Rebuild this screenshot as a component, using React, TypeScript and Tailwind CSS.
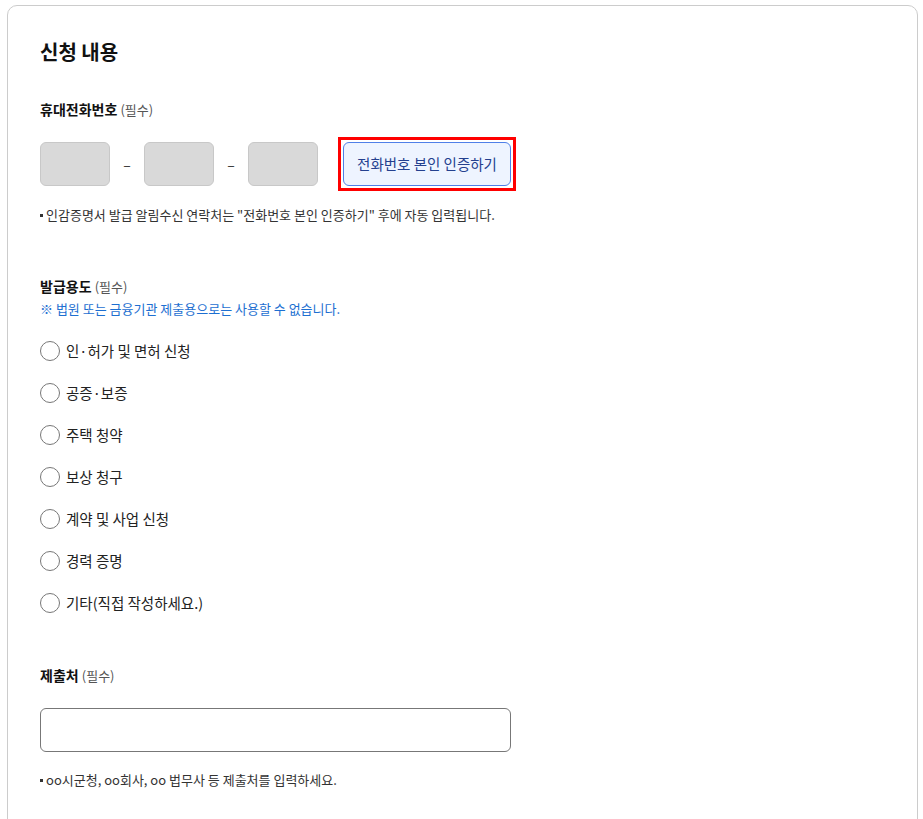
const purposes = [
  "인·허가 및 면허 신청",
  "공증·보증",
  "주택 청약",
  "보상 청구",
  "계약 및 사업 신청",
  "경력 증명",
  "기타(직접 작성하세요.)",
];

function FieldLabel({ title }: { title: string }) {
  return (
    <p className="text-[14px] leading-[20px] text-[#111]">
      <span className="font-bold">{title}</span>{" "}
      <span className="text-[13px] text-[#555]">(필수)</span>
    </p>
  );
}

function PhoneBox() {
  return (
    <input
      type="text"
      disabled
      className="h-[44px] w-[70px] rounded-[6px] border border-[#c8c8c8] bg-[#d9d9d9]"
    />
  );
}

export default function App() {
  return (
    <div
      className="min-h-[819px] bg-white pl-[7px] pr-[5px] pt-[5px] text-[#222]"
      style={{ fontFamily: '"Noto Sans CJK KR", "Noto Sans", sans-serif' }}
    >
      <div className="min-h-[900px] rounded-t-[10px] border border-[#cccccc] px-[32px] pt-[32px]">
        <h2 className="text-[20px] font-bold leading-[28px] text-[#111]">신청 내용</h2>

        {/* 휴대전화번호 */}
        <div className="mt-[33px]">
          <FieldLabel title="휴대전화번호" />
          <div className="mt-[17px] flex items-center">
            <PhoneBox />
            <span className="w-[34px] text-center text-[14px] text-[#333]">–</span>
            <PhoneBox />
            <span className="w-[34px] text-center text-[14px] text-[#333]">–</span>
            <PhoneBox />
            <div className="ml-[20px] border-[3px] border-[#ff0000] p-[2px]">
              <button
                type="button"
                className="block h-[44px] w-[168px] rounded-[6px] border border-[#4f7fe8] bg-[#eef4ff] text-[14.5px] text-[#24408e]"
              >
                전화번호 본인 인증하기
              </button>
            </div>
          </div>
          <p className="mt-[15px] flex items-center text-[13px] leading-[18px] text-[#333]">
            <span className="mr-[3px] inline-block h-[3px] w-[3px] bg-[#333]" />
            인감증명서 발급 알림수신 연락처는 "전화번호 본인 인증하기" 후에 자동 입력됩니다.
          </p>
        </div>

        {/* 발급용도 */}
        <div className="mt-[52px]">
          <FieldLabel title="발급용도" />
          <p className="mt-[3px] text-[13px] leading-[18px] text-[#1d6fd1]">
            ※ 법원 또는 금융기관 제출용으로는 사용할 수 없습니다.
          </p>
          <div className="mt-[12px] flex flex-col">
            {purposes.map((p) => (
              <label key={p} className="flex h-[42px] items-center gap-[6px]">
                <input
                  type="radio"
                  name="purpose"
                  className="h-[20px] w-[20px] appearance-none rounded-full border-[1.5px] border-[#777] bg-white"
                />
                <span className="text-[14.5px] text-[#222]">{p}</span>
              </label>
            ))}
          </div>
        </div>

        {/* 제출처 */}
        <div className="mt-[41px]">
          <FieldLabel title="제출처" />
          <input
            type="text"
            className="mt-[22px] h-[44px] w-[471px] rounded-[6px] border border-[#777] bg-white px-3"
          />
          <p className="mt-[19px] flex items-center text-[13px] leading-[18px] text-[#333]">
            <span className="mr-[3px] inline-block h-[3px] w-[3px] bg-[#333]" />
            oo시군청, oo회사, oo 법무사 등 제출처를 입력하세요.
          </p>
        </div>
      </div>
    </div>
  );
}
